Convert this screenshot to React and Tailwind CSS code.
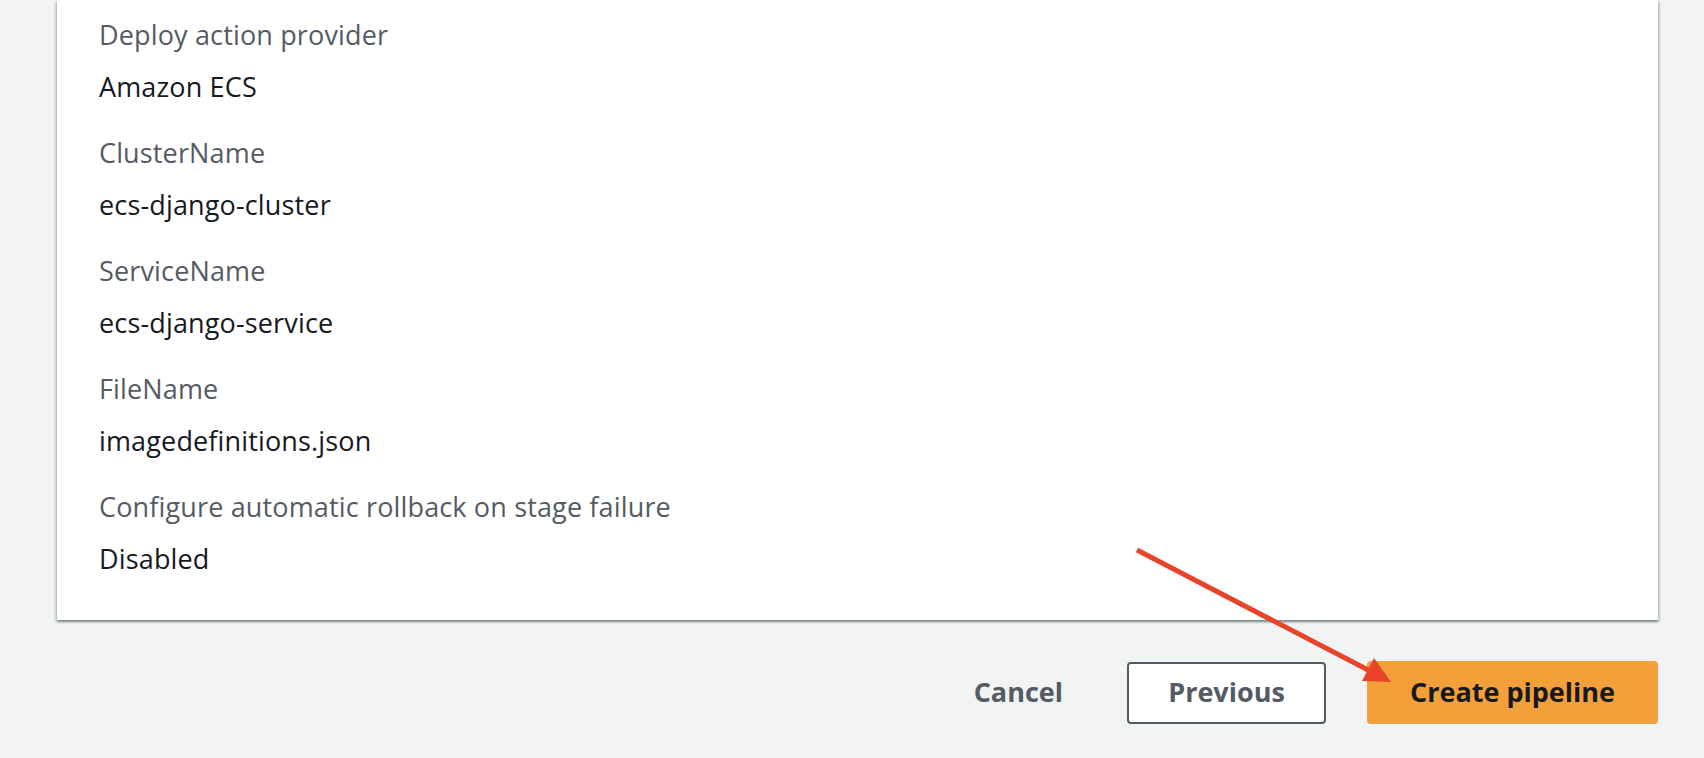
// Review step – deploy stage summary
import React from 'react';

const rows = [
    { label: 'Deploy action provider', value: 'Amazon ECS' },
    { label: 'ClusterName', value: 'ecs-django-cluster' },
    { label: 'ServiceName', value: 'ecs-django-service' },
    { label: 'FileName', value: 'imagedefinitions.json' },
    { label: 'Configure automatic rollback on stage failure', value: 'Disabled' },
];

export default function App() {
    return (
        <div
            className="relative min-h-[758px] bg-[#f2f3f3] overflow-hidden"
            style={{ fontFamily: '"Open Sans", "Liberation Sans", Arial, sans-serif' }}
        >
            {/* Summary card */}
            <div className="ml-[57px] mr-[46px] bg-white shadow-[0_2px_2px_0_rgba(0,28,36,0.3),2px_2px_2px_0_rgba(0,28,36,0.15),-2px_2px_2px_0_rgba(0,28,36,0.15)] pl-[42px] pt-[19px] pb-[45px]">
                <div className="flex flex-col gap-[34px]">
                    {rows.map((row) => (
                        <div key={row.label} className="flex flex-col gap-[20px]">
                            <div className="text-[27px] leading-[32px] tracking-[0.15px] text-[#545b64]">{row.label}</div>
                            <div className="text-[27px] leading-[32px] tracking-[0.15px] text-[#16191f]">{row.value}</div>
                        </div>
                    ))}
                </div>
            </div>

            {/* Footer actions */}
            <div className="flex justify-end items-center mt-[41px] mr-[46px]">
                <button className="h-[62px] px-[40px] text-[27px] font-bold text-[#545b64] border-2 border-transparent">
                    Cancel
                </button>
                <button className="ml-[22px] h-[62px] w-[199px] text-[27px] font-bold text-[#545b64] bg-white border-2 border-[#545b64] rounded-[4px]">
                    Previous
                </button>
                <button className="ml-[41px] h-[63px] w-[291px] text-[27px] font-bold text-[#16191f] bg-[#f3a03a] rounded-[4px]">
                    Create pipeline
                </button>
            </div>

            {/* Annotation arrow */}
            <svg className="absolute inset-0 pointer-events-none" width="1704" height="758">
                <line x1="1137" y1="550" x2="1372" y2="672" stroke="#e8432b" strokeWidth="5" strokeLinecap="butt" />
                <polygon points="1391,682 1374,658 1362,681" fill="#e8432b" />
            </svg>
        </div>
    );
}
